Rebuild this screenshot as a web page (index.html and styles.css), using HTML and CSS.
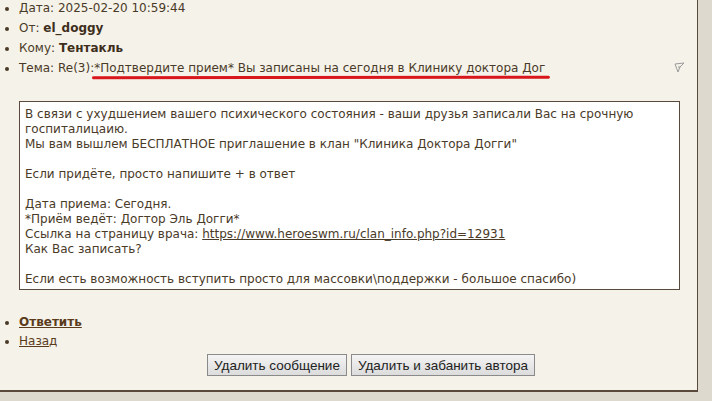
FILE: index.html
```html
<!DOCTYPE html>
<html>
<head>
<meta charset="utf-8">
<link rel="stylesheet" href="styles.css">
</head>
<body>
<div class="panel">
  <ul class="meta">
    <li>Дата: 2025-02-20 10:59:44</li>
    <li>От: <b>el_doggy</b></li>
    <li>Кому: <b>Тентакль</b></li>
    <li class="subject">Тема: Re(3):*Подтвердите прием* Вы записаны на сегодня в Клинику доктора Дог<span class="redline"></span><svg class="flag" width="11" height="11" viewBox="0 0 11 11"><path d="M1 2 L10 1 L6 5 L4 10 Z M4 5 L6 5" fill="none" stroke="#9a9a9a" stroke-width="1"/></svg></li>
  </ul>
  <div class="message">В связи с ухудшением вашего психического состояния - ваши друзья записали Вас на срочную госпиталицаию.<br>Мы вам вышлем БЕСПЛАТНОЕ приглашение в клан "Клиника Доктора Догги"<br><br>Если придёте, просто напишите + в ответ<br><br>Дата приема: Сегодня.<br>*Приём ведёт: Догтор Эль Догги*<br>Ссылка на страницу врача: <a href="#">https://www.heroeswm.ru/clan_info.php?id=12931</a><br>Как Вас записать?<br><br>Если есть возможность вступить просто для массовки\поддержки - большое спасибо)</div>
  <ul class="actions">
    <li><a href="#"><b>Ответить</b></a></li>
    <li><a href="#">Назад</a></li>
  </ul>
  <div class="buttons">
    <button class="btn">Удалить сообщение</button>
    <button class="btn">Удалить и забанить автора</button>
  </div>
</div>
</body>
</html>
```
FILE: styles.css
```css
html, body {
  margin: 0;
  padding: 0;
  background: #ddd9cf;
}
body {
  font-family: "DejaVu Sans", Verdana, sans-serif;
  font-size: 12px;
  color: #4a3a28;
}
.panel {
  width: 698px;
  height: 394px;
  background: #f5f2e9;
  border-right: 1px solid #5a4a3c;
  border-bottom: 2px solid #5a4a3c;
  box-sizing: border-box;
}
.meta, .actions {
  margin: 0;
  padding: 0 0 0 19px;
  list-style: disc;
}
.meta li {
  line-height: 20px;
  position: relative;
}
.meta li:first-child {
  margin-top: -2px;
}
.meta b {
  color: #3e2e1c;
}
.subject {
  width: 666px;
}
.redline {
  position: absolute;
  left: 73px;
  top: 18px;
  width: 458px;
  height: 3px;
  background: #d8161c;
  border-radius: 2px;
  transform: rotate(-0.08deg);
}
.flag {
  position: absolute;
  right: 0;
  top: 4px;
}
.message {
  margin: 23px 0 0 19px;
  width: 661px;
  box-sizing: border-box;
  border: 1px solid #5a4a3c;
  background: #fff;
  padding: 5px 5px 2px 5px;
  line-height: 15px;
}
.message a {
  color: #4a3a28;
}
.actions {
  margin-top: 23px;
}
.actions li {
  line-height: 19px;
}
.actions a {
  color: #5a3c1c;
}
.buttons {
  margin-top: 3px;
  padding-left: 207px;
  display: flex;
  gap: 4px;
}
.btn {
  font-family: "Liberation Sans", Arial, sans-serif;
  font-size: 13.5px;
  color: #222;
  height: 22px;
  padding: 0 6px;
  margin: 0;
  border: 1px solid #8a8a8a;
  border-radius: 0;
  background: linear-gradient(#f4f4f4, #dcdcdc);
}
```
